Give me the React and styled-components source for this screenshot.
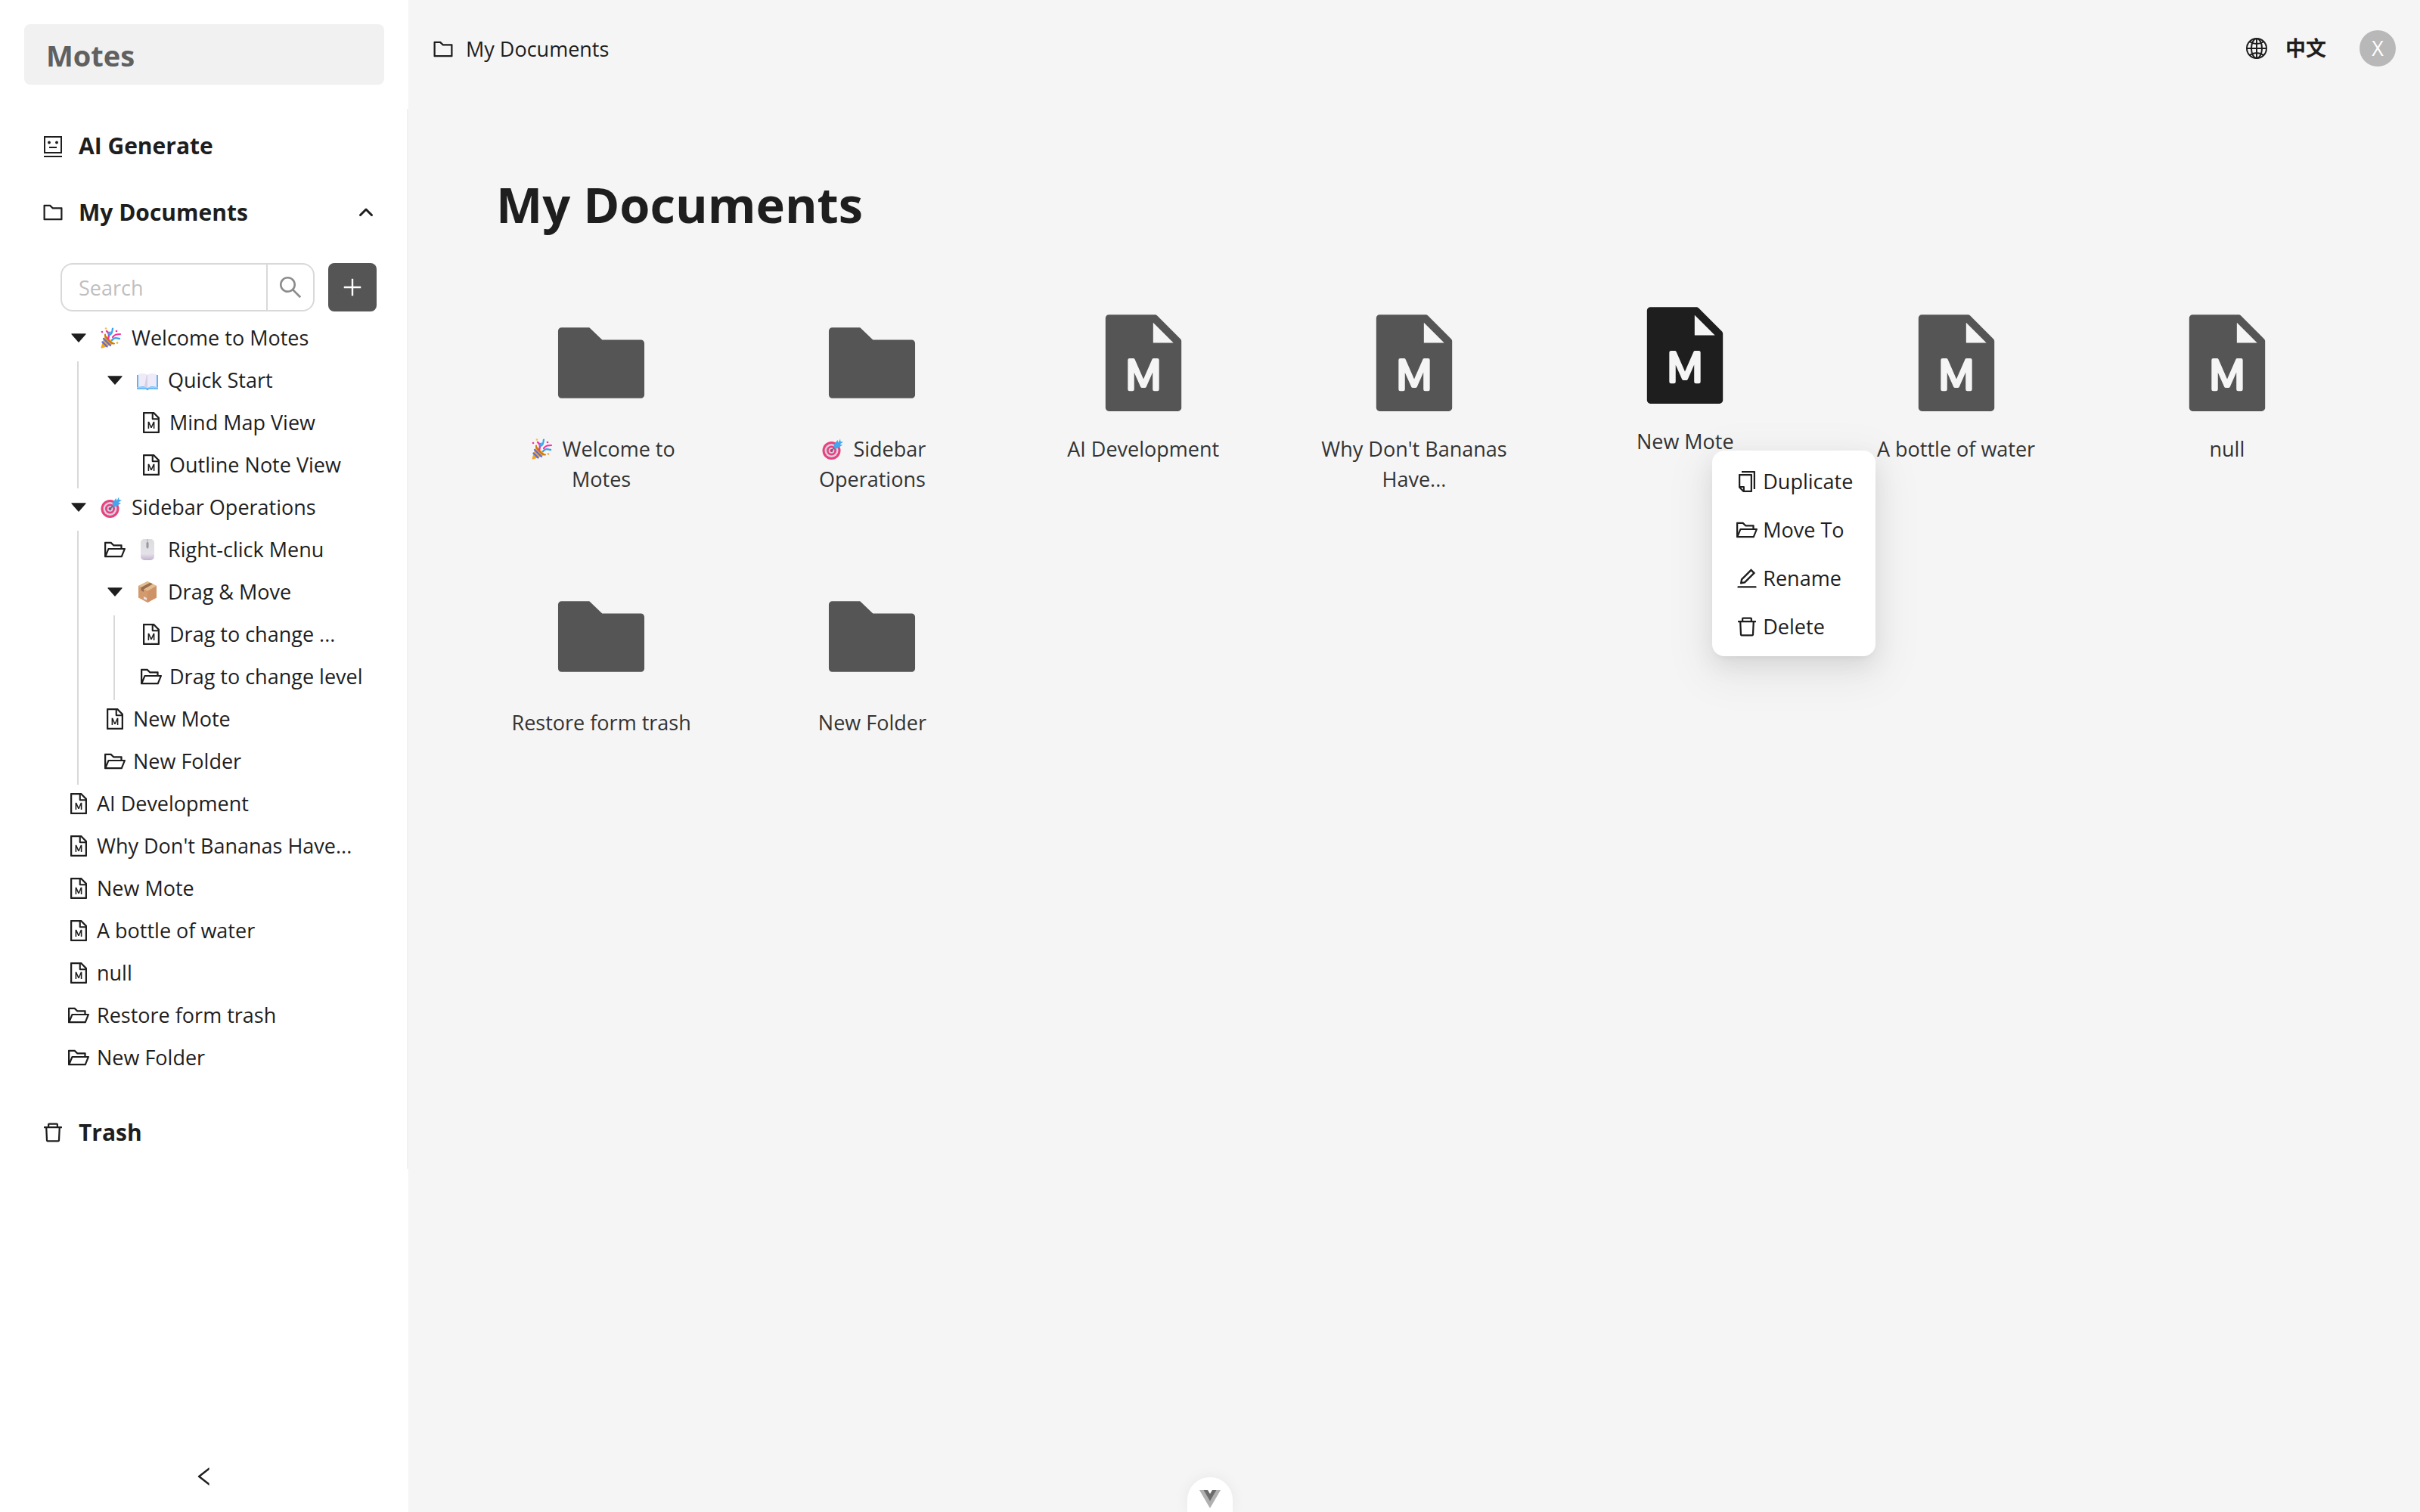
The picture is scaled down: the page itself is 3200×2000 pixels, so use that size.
import React from "react";
import styled, { createGlobalStyle } from "styled-components";
import {
  AiFillCaretDown,
  AiFillFileMarkdown,
  AiFillFolder,
  AiOutlineCopy,
  AiOutlineDelete,
  AiOutlineEdit,
  AiOutlineFileMarkdown,
  AiOutlineFolder,
  AiOutlineFolderOpen,
  AiOutlineLeft,
  AiOutlinePlus,
  AiOutlineSearch,
} from "react-icons/ai";
import { IoGlobeOutline } from "react-icons/io5";

const GlobalStyle = createGlobalStyle`
  *, *::before, *::after { box-sizing: border-box; }
  body {
    margin: 0;
    background: #f5f5f5;
    color: #1e1e1e;
    font-family: "Open Sans", "Noto Sans", "Noto Sans CJK SC", sans-serif;
    font-size: 27px;
    line-height: 40px;
  }
  button, input { font: inherit; color: inherit; }
  button { padding: 0; border: 0; background: none; cursor: pointer; }
  svg { display: block; flex: none; }
`;

/* ---------- drawings ---------- */

const RobotIcon = () => (
  <svg width="32" height="32" viewBox="0 0 32 32" fill="none" stroke="currentColor" strokeWidth="2">
    <rect x="5" y="4" width="22" height="21" />
    <path d="M4 30h24" />
    <path d="M11 18h10" />
    <circle cx="11" cy="11.500" r="1.900" fill="currentColor" stroke="none" />
    <circle cx="21" cy="11.500" r="1.900" fill="currentColor" stroke="none" />
  </svg>
);

const ChevronUp = () => (
  <svg width="32" height="32" viewBox="0 0 32 32" fill="none" stroke="currentColor" strokeWidth="3" strokeLinecap="round" strokeLinejoin="round">
    <path d="M8.500 19.500L16 12l7.500 7.500" />
  </svg>
);

const VueLogo = () => (
  <svg width="28" height="24" viewBox="0 0 28 24">
    <path d="M0 0h28L14 24z" fill="#b0b0b0" />
    <path d="M5.600 0h16.800L14 14.500z" fill="#6b6b6b" />
    <path d="M11 0h6l-3 5z" fill="#fff" />
  </svg>
);

const Party = () => (
  <svg width="28" height="28" viewBox="0 0 28 28" fill="none" strokeLinecap="round">
    <path d="M6 9.500L18 21.500L2.500 27.500C1 28 .2 27 .8 25.500z" fill="#f5a623" />
    <path d="M6 9.500c-1 3 9 13 12 12" stroke="#c77a12" strokeWidth="2" />
    <path d="M4 15l9 9M2.500 19.500l6 6" stroke="#5b6ee0" strokeWidth="2.400" />
    <path d="M8 5c3 2 4 5 2 10" stroke="#f92f9f" strokeWidth="2.400" />
    <path d="M15 17c3-4 6-3 10-2" stroke="#38a3ea" strokeWidth="2.400" />
    <path d="M16 1.500c-1 4 0 6-3 8-2 1-3-2-.5-3" stroke="#38a3ea" strokeWidth="2.200" />
    <path d="M16 13c3-4 6-4 10-4" stroke="#f92f9f" strokeWidth="2.200" />
    <circle cx="2" cy="6" r="1.300" fill="#f92f9f" />
    <circle cx="7" cy="1.500" r="1.300" fill="#f5c04a" />
    <circle cx="21" cy="5" r="1.300" fill="#f92f9f" />
    <circle cx="22" cy="20.500" r="1.300" fill="#f5a623" />
  </svg>
);

const Book = () => (
  <svg width="28" height="28" viewBox="0 0 28 28">
    <path d="M0 7h28v19H16l-2 1.500L12 26H0z" fill="#5db4f5" />
    <path d="M0 23h28v1.500H0z" fill="#8ed3fb" />
    <path d="M2 6c4-1.500 9-1.500 12 1c3-2.500 8-2.500 12-1v17c-4-1-9-1-12 1c-3-2-8-2-12-1z" fill="#efeaf8" />
    <path d="M14 7v17c-1-1-2-1.500-4-1.800L13 6.500z" fill="#d6cfe6" />
  </svg>
);

const Target = () => (
  <svg width="28" height="28" viewBox="0 0 28 28">
    <circle cx="12.500" cy="16" r="12" fill="#e8427a" />
    <circle cx="12.500" cy="16" r="9" fill="#d9cfe6" />
    <circle cx="12.500" cy="16" r="6.500" fill="#e8427a" />
    <circle cx="12.500" cy="16" r="3.800" fill="#d9cfe6" />
    <circle cx="12.500" cy="16" r="2" fill="#d43265" />
    <path d="M12.500 16L20 8.500" stroke="#54698c" strokeWidth="1.600" />
    <path d="M15.500 8.500L20.500 2l1 3.500L24 .5l.5 3.500l3.500 .8l-4.500 2.700l3.500 1l-6.500 4.500l-4 .3z" fill="#43a6ee" />
  </svg>
);

const Mouse = () => (
  <svg width="28" height="28" viewBox="0 0 28 28">
    <defs>
      <linearGradient id="mouseBody" x1="0" y1="0" x2="0" y2="1">
        <stop offset="0" stopColor="#dcdcdf" />
        <stop offset=".7" stopColor="#e4e2e8" />
        <stop offset="1" stopColor="#c3b2d0" />
      </linearGradient>
    </defs>
    <rect x="5" y="0" width="18" height="28" rx="5" fill="url(#mouseBody)" />
    <path d="M14 0v13" stroke="#a9a9ad" strokeWidth="1" />
    <rect x="12.500" y="4" width="3" height="8" rx="1.500" fill="#9a9a9e" />
  </svg>
);

const Package = () => (
  <svg width="28" height="28" viewBox="0 0 28 28">
    <path d="M14 0l12 6v15.500L14 28L2 21.500V6z" fill="#d39a6d" />
    <path d="M14 0l12 6L14 13L2 6z" fill="#e2bd8d" />
    <path d="M14 13l12-7v15.500L14 28z" fill="#cf9266" />
    <path d="M5.500 8L17.500 1.700l3.500 1.800L9 10.500v3.500l-3.500-2z" fill="#996b50" />
    <path d="M9 20l4 2v3l-4-2z" fill="#efe3ea" />
  </svg>
);

const emojis = { party: Party, book: Book, target: Target, mouse: Mouse, box: Package };

/* ---------- layout ---------- */

const Shell = styled.div`
  display: flex;
  min-height: 100vh;
`;

const Sidebar = styled.aside`
  display: flex;
  flex-direction: column;
  flex: none;
  width: 540px;
  background: #fff;
`;

const Brand = styled.a`
  height: 80px;
  margin: 32px;
  padding: 0 29px;
  border-radius: 8px;
  background: #f1f1f1;
  color: #606060;
  font-size: 38px;
  font-weight: 700;
  line-height: 82px;
  text-decoration: none;
`;

const SideMenu = styled.nav`
  padding: 5px 0 4px;
  border-right: 2px solid #f1f1f1;
`;

const SideItem = styled.button`
  display: flex;
  align-items: center;
  width: 100%;
  height: 88px;
  padding: 0 38px 0 54px;
  font-size: 30px;
  font-weight: 700;
  text-align: left;
`;

const SideLabel = styled.span`
  flex: 1;
  margin-left: 18px;
`;

const Tools = styled.div`
  display: flex;
  gap: 18px;
  padding: 23px 40px 10px 80px;
`;

const SearchBox = styled.form`
  display: flex;
  flex: 1;
  min-width: 0;
  height: 64px;
  border: 2px solid #d9d9d9;
  border-radius: 16px;
  overflow: hidden;
`;

const SearchInput = styled.input`
  flex: 1;
  min-width: 0;
  padding: 2px 22px 0;
  border: 0;
  outline: 0;
  background: none;
  &::placeholder { color: #bfbfbf; opacity: 1; }
`;

const SearchButton = styled.button`
  display: grid;
  place-items: center;
  width: 62px;
  border-left: 2px solid #d9d9d9;
  color: #8c8c8c;
`;

const AddButton = styled.button`
  display: grid;
  place-items: center;
  width: 64px;
  height: 64px;
  border-radius: 8px;
  background: #555;
  color: #fff;
`;

const Tree = styled.ul`
  margin: 0;
  padding: 0 0 24px 78px;
  list-style: none;
`;

const Branch = styled.ul`
  margin: 0 0 0 24px;
  padding: 0 0 0 22px;
  border-left: 2px solid ${(p) => (p.$plain ? "transparent" : "#d9d9d9")};
  list-style: none;
`;

const TreeRow = styled.a`
  display: flex;
  align-items: center;
  height: 56px;
  padding: 0 0 6px 10px;
  color: inherit;
  text-decoration: none;
  white-space: nowrap;
`;

const RowIcon = styled.span`
  display: grid;
  place-items: center;
  width: 32px;
  margin-right: 8px;
`;

const EmojiSlot = styled.span`
  display: inline-grid;
  place-items: center;
  width: 38px;
  margin-right: 8px;
  vertical-align: -4px;
`;

const Collapse = styled.button`
  display: grid;
  place-items: center;
  height: 94px;
  margin-top: auto;
`;

const Main = styled.main`
  flex: 1;
  min-width: 0;
`;

const Header = styled.header`
  display: flex;
  align-items: center;
  justify-content: space-between;
  height: 128px;
  padding: 0 32px 0 30px;
`;

const Crumb = styled.a`
  display: flex;
  align-items: center;
  gap: 14px;
  padding-top: 2px;
  color: inherit;
  text-decoration: none;
`;

const HeaderTools = styled.div`
  display: flex;
  align-items: center;
`;

const Language = styled.button`
  display: flex;
  align-items: center;
  gap: 22px;
  margin-right: 44px;
  font-weight: 700;
`;

const Avatar = styled.button`
  width: 48px;
  height: 48px;
  border-radius: 50%;
  background: #b8b8b8;
  color: #fff;
`;

const Title = styled.h1`
  margin: 90px 0 0;
  padding: 0 116px;
  font-size: 65px;
  font-weight: 700;
  line-height: 104px;
`;

const Grid = styled.div`
  display: grid;
  grid-template-columns: repeat(auto-fill, minmax(320px, 1fr));
  row-gap: 115px;
  padding: 85px 76px;
`;

const Cell = styled.div`
  position: relative;
  text-align: center;
`;

const Card = styled.a`
  display: flex;
  flex-direction: column;
  align-items: center;
  gap: 21px;
  color: ${(p) => (p.$active ? "#1e1e1e" : "#555")};
  text-decoration: none;
  transform: ${(p) => (p.$active ? "translateY(-10px)" : "none")};
`;

const CardLabel = styled.span`
  max-width: 256px;
  color: #333;
`;

const Menu = styled.div`
  position: absolute;
  z-index: 2;
  top: 189px;
  left: calc(50% + 36px);
  width: 216px;
  padding: 9px 0 7px;
  border-radius: 16px;
  background: #fff;
  box-shadow:
    0 6px 12px -8px rgba(0, 0, 0, 0.12),
    0 12px 32px rgba(0, 0, 0, 0.08),
    0 18px 56px 16px rgba(0, 0, 0, 0.05);
`;

const MenuItem = styled.button`
  display: flex;
  align-items: center;
  gap: 5px;
  width: 100%;
  height: 64px;
  padding: 0 20px 0 30px;
`;

const DevTab = styled.button`
  position: fixed;
  bottom: 0;
  left: calc(50% - 30px);
  display: flex;
  justify-content: center;
  width: 60px;
  height: 46px;
  padding-top: 17px;
  border-radius: 30px 30px 0 0;
  background: #fff;
  box-shadow: 0 0 20px rgba(0, 0, 0, 0.06);
`;

/* ---------- data ---------- */

const tree = [
  {
    name: "Welcome to Motes", emoji: "party", children: [
      { name: "Quick Start", emoji: "book", plain: true, children: [
        { name: "Mind Map View" },
        { name: "Outline Note View" },
      ] },
    ],
  },
  {
    name: "Sidebar Operations", emoji: "target", children: [
      { name: "Right-click Menu", emoji: "mouse", folder: true },
      { name: "Drag & Move", emoji: "box", children: [
        { name: "Drag to change ..." },
        { name: "Drag to change level", folder: true },
      ] },
      { name: "New Mote" },
      { name: "New Folder", folder: true },
    ],
  },
  { name: "AI Development" },
  { name: "Why Don't Bananas Have..." },
  { name: "New Mote" },
  { name: "A bottle of water" },
  { name: "null" },
  { name: "Restore form trash", folder: true },
  { name: "New Folder", folder: true },
];

const cards = [
  { name: "Welcome to Motes", emoji: "party", folder: true },
  { name: "Sidebar Operations", emoji: "target", folder: true },
  { name: "AI Development" },
  { name: "Why Don't Bananas Have..." },
  { name: "New Mote", active: true },
  { name: "A bottle of water" },
  { name: "null" },
  { name: "Restore form trash", folder: true },
  { name: "New Folder", folder: true },
];

const actions = [
  ["Duplicate", AiOutlineCopy],
  ["Move To", AiOutlineFolderOpen],
  ["Rename", AiOutlineEdit],
  ["Delete", AiOutlineDelete],
];

const Emoji = ({ name }) => {
  const Drawing = emojis[name];
  return <EmojiSlot aria-hidden="true"><Drawing /></EmojiSlot>;
};

function Node({ node }) {
  return (
    <li>
      <TreeRow href="#">
        <RowIcon>
          {node.children ? <AiFillCaretDown size={28} />
            : node.folder ? <AiOutlineFolderOpen size={32} />
            : <AiOutlineFileMarkdown size={32} />}
        </RowIcon>
        {node.emoji && <Emoji name={node.emoji} />}
        <span>{node.name}</span>
      </TreeRow>
      {node.children && (
        <Branch $plain={node.plain}>
          {node.children.map((c) => <Node key={c.name} node={c} />)}
        </Branch>
      )}
    </li>
  );
}

export default function App() {
  return (
    <>
      <GlobalStyle />
      <Shell>
        <Sidebar>
          <Brand href="#">Motes</Brand>
          <SideMenu>
            <SideItem><RobotIcon /><SideLabel>AI Generate</SideLabel></SideItem>
            <SideItem aria-expanded="true">
              <AiOutlineFolder size={32} />
              <SideLabel>My Documents</SideLabel>
              <ChevronUp />
            </SideItem>
            <Tools>
              <SearchBox role="search">
                <SearchInput aria-label="Search" placeholder="Search" />
                <SearchButton type="button" aria-label="Search"><AiOutlineSearch size={36} /></SearchButton>
              </SearchBox>
              <AddButton aria-label="Add"><AiOutlinePlus size={32} /></AddButton>
            </Tools>
            <Tree>{tree.map((n) => <Node key={n.name} node={n} />)}</Tree>
            <SideItem><AiOutlineDelete size={32} /><SideLabel>Trash</SideLabel></SideItem>
          </SideMenu>
          <Collapse aria-label="Collapse sidebar"><AiOutlineLeft size={32} /></Collapse>
        </Sidebar>
        <Main>
          <Header>
            <Crumb href="#"><AiOutlineFolder size={32} />My Documents</Crumb>
            <HeaderTools>
              <Language><IoGlobeOutline size={32} /><span lang="zh">中文</span></Language>
              <Avatar>X</Avatar>
            </HeaderTools>
          </Header>
          <Title>My Documents</Title>
          <Grid>
            {cards.map((c) => (
              <Cell key={c.name}>
                <Card href="#" $active={c.active}>
                  {c.folder ? <AiFillFolder size={146} /> : <AiFillFileMarkdown size={146} />}
                  <CardLabel>{c.emoji && <Emoji name={c.emoji} />}{c.name}</CardLabel>
                </Card>
                {c.active && (
                  <Menu role="menu">
                    {actions.map(([label, Icon]) => (
                      <MenuItem key={label} role="menuitem"><Icon size={32} />{label}</MenuItem>
                    ))}
                  </Menu>
                )}
              </Cell>
            ))}
          </Grid>
        </Main>
      </Shell>
      <DevTab aria-label="Vue DevTools"><VueLogo /></DevTab>
    </>
  );
}
